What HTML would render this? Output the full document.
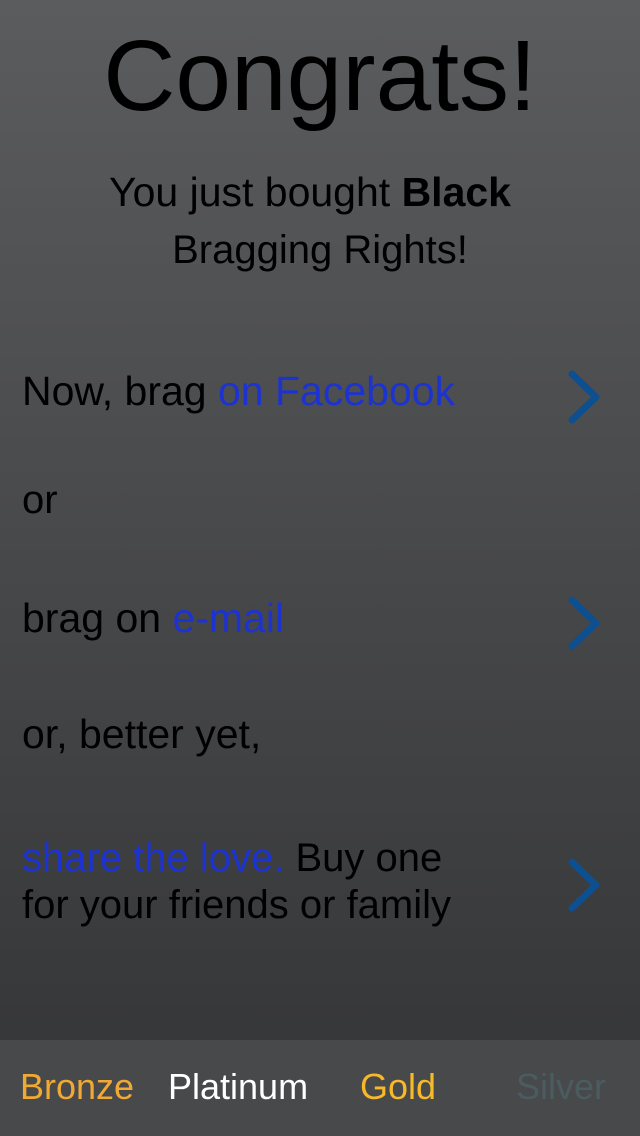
<!DOCTYPE html>
<html><head><meta charset="utf-8"><style>
body{margin:0;width:640px;height:1136px;overflow:hidden;font-family:"Liberation Sans",sans-serif;
background:linear-gradient(#5b5c5e,#47484a 50%,#333436);position:relative;color:#000}
.t{position:absolute;white-space:nowrap;line-height:1}
.b{color:#1c33d2}
svg{position:absolute}
.tab{position:absolute;left:0;top:1040px;width:640px;height:96px;background:#48494b}
</style></head><body>
<div class="t" style="left:0;width:640px;text-align:center;top:26px;font-size:100px;letter-spacing:0px">Congrats!</div>
<div class="t" style="left:0;width:620px;text-align:center;top:172px;font-size:41px">You just bought <b>Black</b></div>
<div class="t" style="left:0;width:640px;text-align:center;top:230px;font-size:40px">Bragging Rights!</div>
<div class="t" style="left:22px;top:371px;font-size:41px">Now, brag <span class="b">on Facebook</span></div>
<div class="t" style="left:22px;top:480px;font-size:40px">or</div>
<div class="t" style="left:22px;top:598px;font-size:41px">brag on <span class="b">e-mail</span></div>
<div class="t" style="left:22px;top:714px;font-size:41px">or, better yet,</div>
<div class="t" style="left:22px;top:835px;font-size:40px;line-height:47px;white-space:normal;width:470px"><span class="b">share the love.</span> Buy one<br>for your friends or family</div>
<svg width="640" height="1136" style="left:0;top:0">
<g fill="none" stroke="#0d4f8f" stroke-width="7" stroke-linecap="round" stroke-linejoin="round">
<path d="M572 374L596 397L572 420"/>
<path d="M572 600L596 623L572 646"/>
<path d="M572 862L596 885L572 908"/>
</g></svg>
<div class="tab">
<div class="t" style="left:20px;top:29px;font-size:36px;color:#f0a932">Bronze</div>
<div class="t" style="left:168px;top:29px;font-size:36px;color:#fff">Platinum</div>
<div class="t" style="left:360px;top:29px;font-size:36px;color:#f7b928">Gold</div>
<div class="t" style="left:516px;top:29px;font-size:36px;color:#4b5c60">Silver</div>
</div>
</body></html>
